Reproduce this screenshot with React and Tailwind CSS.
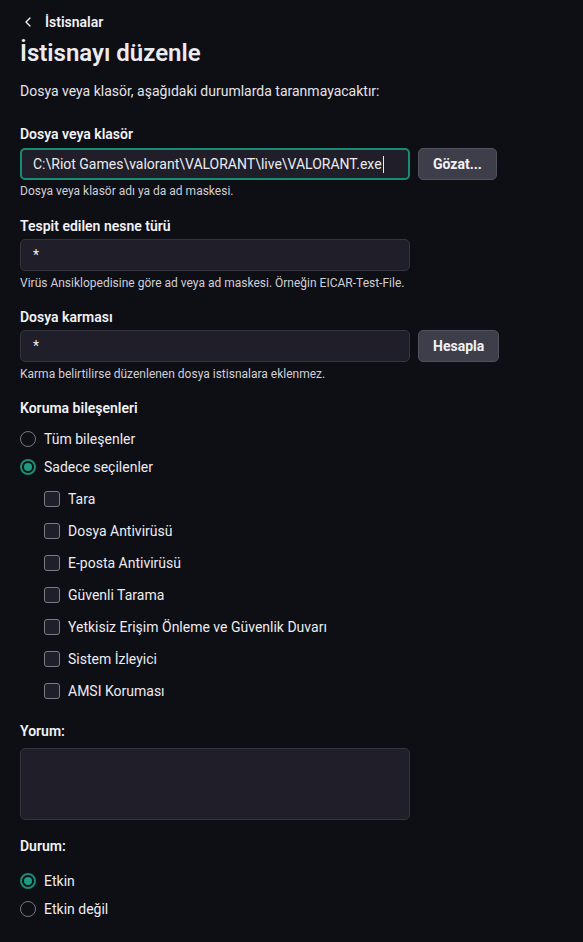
import { ChevronLeft } from 'lucide-react'

const Label = ({ children, className = '' }) => (
  <div className={`text-[14px] font-semibold text-[#f2f2f5] leading-5 ${className}`}>{children}</div>
)

const Help = ({ children, className = 'mt-[4px]' }) => (
  <div className={`text-[12px] text-[#d0d0d6] leading-4 ${className}`}>{children}</div>
)

const Input = ({ value, focused }) => (
  <div
    className={`w-[390px] h-[32px] rounded-[5px] bg-[#1f1e29] flex items-center px-3 text-[14px] text-[#ececf0] whitespace-nowrap overflow-hidden ${
      focused ? 'border-2 border-[#1a8b74] px-[11px]' : 'border border-[#34333f]'
    }`}
  >
    {value}
    {focused && <span className="w-px h-[17px] bg-[#ececf0] ml-px shrink-0" />}
  </div>
)

const Button = ({ children }) => (
  <button className="h-[32px] px-[14px] rounded-[5px] bg-[#3e3e4b] border border-[#52525f] text-[14px] font-bold text-[#f2f2f5]">
    {children}
  </button>
)

const Radio = ({ checked, label }) => (
  <div className="flex items-center gap-2 h-[28px]">
    {checked ? (
      <span className="w-4 h-4 rounded-full border-2 border-[#1a8b74] flex items-center justify-center">
        <span className="w-2 h-2 rounded-full bg-[#1c9d82]" />
      </span>
    ) : (
      <span className="w-4 h-4 rounded-full border-[1.5px] border-[#75757f]" />
    )}
    <span className="text-[14px] text-[#ececf0]">{label}</span>
  </div>
)

const Check = ({ label }) => (
  <div className="flex items-center gap-2 h-[32px]">
    <span className="w-4 h-4 rounded-[3px] border-[1.5px] border-[#7a7a85] bg-[#1f1e29]" />
    <span className="text-[14px] text-[#ececf0]">{label}</span>
  </div>
)

export default function App() {
  const comps = [
    'Tara',
    'Dosya Antivirüsü',
    'E-posta Antivirüsü',
    'Güvenli Tarama',
    'Yetkisiz Erişim Önleme ve Güvenlik Duvarı',
    'Sistem İzleyici',
    'AMSI Koruması',
  ]
  return (
    <div className="w-[583px] h-[942px] bg-[#0e0e15] text-[#ececf0] px-5 pt-[12px] overflow-hidden" style={{ fontFamily: 'Roboto, "Noto Sans", sans-serif' }}>
      <div className="flex items-center gap-[9px] h-5 text-[14px] font-semibold text-[#f2f2f5]">
        <ChevronLeft size={16} strokeWidth={2} className="text-[#f2f2f5]" />
        İstisnalar
      </div>
      <h1 className="text-[24px] font-semibold leading-[32px] mt-[5px]">İstisnayı düzenle</h1>
      <p className="text-[14px] leading-5 mt-[12px] text-[#e4e4ea]">Dosya veya klasör, aşağıdaki durumlarda taranmayacaktır:</p>

      <Label className="mt-[23px]">Dosya veya klasör</Label>
      <div className="flex gap-2 mt-[4px]">
        <Input value="C:\Riot Games\valorant\VALORANT\live\VALORANT.exe" focused />
        <Button>Gözat...</Button>
      </div>
      <Help className="mt-[3px]">Dosya veya klasör adı ya da ad maskesi.</Help>

      <Label className="mt-[17px]">Tespit edilen nesne türü</Label>
      <div className="mt-[3px]">
        <Input value="*" />
      </div>
      <Help>Virüs Ansiklopedisine göre ad veya ad maskesi. Örneğin EICAR-Test-File.</Help>

      <Label className="mt-[16px]">Dosya karması</Label>
      <div className="flex gap-2 mt-[3px]">
        <Input value="*" />
        <Button>Hesapla</Button>
      </div>
      <Help>Karma belirtilirse düzenlenen dosya istisnalara eklenmez.</Help>

      <Label className="mt-[16px]">Koruma bileşenleri</Label>
      <div className="mt-[7px]">
        <Radio label="Tüm bileşenler" />
        <Radio label="Sadece seçilenler" checked />
      </div>
      <div className="pl-6 mt-[2px]">
        {comps.map((c) => (
          <Check key={c} label={c} />
        ))}
      </div>

      <Label className="mt-[14px]">Yorum:</Label>
      <div className="w-[390px] h-[72px] mt-[7px] rounded-[5px] bg-[#1f1e29] border border-[#34333f]" />

      <Label className="mt-[16px]">Durum:</Label>
      <div className="mt-[11px]">
        <Radio label="Etkin" checked />
        <Radio label="Etkin değil" />
      </div>
    </div>
  )
}
